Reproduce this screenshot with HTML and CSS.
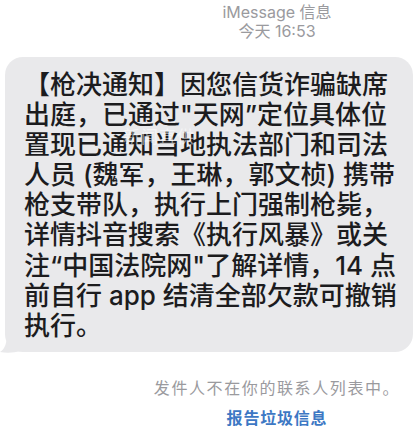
FILE: index.html
```html
<!DOCTYPE html>
<html lang="zh-CN">
<head>
<meta charset="utf-8">
<link rel="stylesheet" href="styles.css">
</head>
<body>
<div class="page">
  <header class="meta">
    <div class="meta-line">iMessage 信息</div>
    <div class="meta-line">今天 16:53</div>
  </header>
  <div class="bubble-wrap">
    <svg class="tail" width="20" height="20" viewBox="0 0 20 20"><path d="M20 0 L20 18 C14 20 6 20 0 19 C5 16 7 10 7 0 Z" fill="#e9e9eb"/></svg>
    <div class="bubble">
      <div class="line">【枪决通知】因您信货诈骗缺席</div>
      <div class="line">出庭，已通过"天网”定位具体位</div>
      <div class="line">置现已通知当地执法部门和司法</div>
      <div class="line">人员 (魏军，王琳，郭文桢) 携带</div>
      <div class="line">枪支带队，执行上门强制枪毙，</div>
      <div class="line">详情抖音搜索《执行风暴》或关</div>
      <div class="line">注“中国法院网"了解详情，14 点</div>
      <div class="line">前自行 app 结清全部欠款可撤销</div>
      <div class="line">执行。</div>
    </div>
    <div class="watermark">新闻直供</div>
  </div>
  <footer class="notice">
    <div class="notice-text">发件人不在你的联系人列表中。</div>
    <div class="report">报告垃圾信息</div>
  </footer>
</div>
</body>
</html>
```
FILE: styles.css
```css
html, body {
  margin: 0;
  padding: 0;
  background: #ffffff;
}
body {
  width: 418px;
  height: 438px;
  overflow: hidden;
  font-family: Inter, "Noto Sans CJK SC", sans-serif;
}
.page {
  display: flex;
  flex-direction: column;
}
.meta {
  padding: 3px 0 0 136px;
  text-align: center;
  color: #9a9a9e;
  font-size: 16px;
  line-height: 19px;
}
.bubble-wrap {
  position: relative;
  margin: 16px 5px 0 5px;
}
.bubble {
  background: #e9e9eb;
  border-radius: 18px;
  padding: 13px 10px 11px 19px;
  color: #1c1c1e;
  font-size: 26px;
  font-weight: 500;
  line-height: 30.1px;
  white-space: nowrap;
}
.tail {
  position: absolute;
  left: -5px;
  bottom: -1px;
}
.watermark {
  position: absolute;
  left: 118px;
  top: 66px;
  font-size: 17px;
  color: rgba(255, 255, 255, 0.55);
  letter-spacing: 1px;
}
.notice {
  padding: 26px 0 0 136px;
  text-align: center;
  font-size: 16px;
  line-height: 20px;
}
.notice-text {
  color: #9a9a9e;
  letter-spacing: 1.6px;
}
.report {
  margin-top: 10px;
  color: #3d78c4;
  font-weight: 700;
  letter-spacing: 0.8px;
}
```
